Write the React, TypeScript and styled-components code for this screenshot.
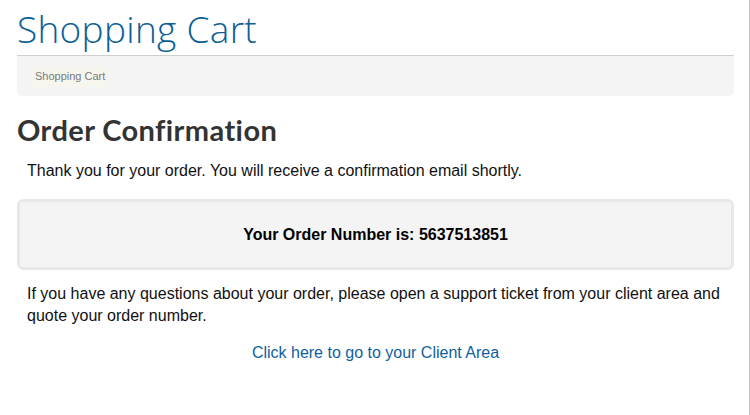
import React from "react";
import styled, { createGlobalStyle } from "styled-components";

const Global = createGlobalStyle`
  html, body { margin: 0; padding: 0; background: #fff; }
  body { font-family: "Liberation Sans", Arial, sans-serif; color: #000; }
`;

const Page = styled.div`
  box-sizing: border-box;
  width: 750px;
  min-height: 415px;
  padding: 0 15px 0 17px;
  border-right: 1px solid #bcbcbc;
`;

const Title = styled.h1`
  margin: 0;
  padding-top: 7px;
  height: 56px;
  box-sizing: border-box;
  font-family: "Open Sans", sans-serif;
  font-weight: 300;
  font-size: 37px;
  line-height: 44px;
  letter-spacing: 0.3px;
  color: #0b5f96;
  border-bottom: 1px solid #cfcfcf;
`;

const Breadcrumb = styled.nav`
  display: flex;
  align-items: center;
  height: 40px;
  padding: 0 15px;
  background: #f4f4f4;
  border-radius: 0 0 5px 5px;
`;

const Crumb = styled.span`
  display: inline-block;
  padding: 4px 3px;
  background: #f6f5ee;
  font-family: "Liberation Sans", Arial, sans-serif;
  font-size: 11px;
  line-height: 13px;
  color: #7a7a7a;
`;

const Heading = styled.h2`
  margin: 0;
  padding-top: 18px;
  font-family: "Lato", sans-serif;
  font-weight: 700;
  font-size: 29px;
  line-height: 32px;
  letter-spacing: 0.4px;
  color: #333;
`;

const Text = styled.p<{ $top?: number }>`
  margin: ${(p) => p.$top ?? 0}px 0 0;
  padding: 0 10px;
  font-size: 16px;
  line-height: 22px;
  color: #111;
`;

const OrderBox = styled.div`
  margin-top: 17px;
  height: 71px;
  box-sizing: border-box;
  display: flex;
  align-items: center;
  justify-content: center;
  background: #f4f4f4;
  border: 3px solid #e8e8e8;
  border-radius: 6px;
  font-weight: 700;
  font-size: 16px;
  color: #000;
`;

const LinkRow = styled.div`
  margin-top: 15px;
  text-align: center;
  font-size: 16px;
  line-height: 22px;
`;

const Link = styled.a`
  color: #1060a0;
  text-decoration: none;
`;

export default function App() {
  return (
    <>
      <Global />
      <Page>
        <Title>Shopping Cart</Title>
        <Breadcrumb>
          <Crumb>Shopping Cart</Crumb>
        </Breadcrumb>
        <Heading>Order Confirmation</Heading>
        <Text $top={14}>Thank you for your order. You will receive a confirmation email shortly.</Text>
        <OrderBox>Your Order Number is: 5637513851</OrderBox>
        <Text $top={13}>
          If you have any questions about your order, please open a support ticket from your client area and
          quote your order number.
        </Text>
        <LinkRow>
          <Link href="#">Click here to go to your Client Area</Link>
        </LinkRow>
      </Page>
    </>
  );
}
